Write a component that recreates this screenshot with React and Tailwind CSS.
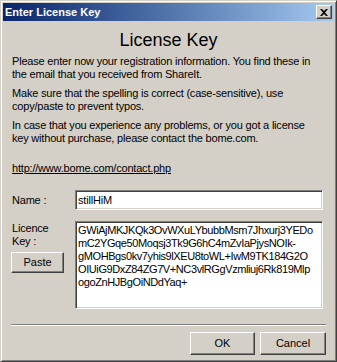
const font = { fontFamily: '"Liberation Sans", Arial, sans-serif' };

const keyLines = [
  "GWiAjMKJKQk3OvWXuLYbubbMsm7Jhxurj3YEDo",
  "mC2YGqe50Moqsj3Tk9G6hC4mZvIaPjysNOIk-",
  "gMOHBgs0kv7yhis9lXEU8toWL+IwM9TK184G2O",
  "OIUiG9DxZ84ZG7V+NC3vlRGgVzmliuj6Rk819Mlp",
  "ogoZnHJBgOiNDdYaq+",
];

function Button({ children, className = "" }) {
  return (
    <div
      className={
        "flex items-center justify-center bg-[#d4d0c8] border border-t-white border-l-white border-r-[#404040] border-b-[#404040] shadow-[inset_-1px_-1px_#808080,inset_1px_1px_#d4d0c8] text-[11px] text-black " +
        className
      }
    >
      {children}
    </div>
  );
}

function Sunken({ children, className = "" }) {
  return (
    <div
      className={
        "bg-white border border-t-[#808080] border-l-[#808080] border-r-white border-b-white shadow-[inset_1px_1px_#404040,inset_-1px_-1px_#d4d0c8] " +
        className
      }
    >
      {children}
    </div>
  );
}

export default function App() {
  return (
    <div
      style={font}
      className="w-[337px] h-[362px] bg-[#d4d0c8] border border-t-[#d4d0c8] border-l-[#d4d0c8] border-r-[#404040] border-b-[#404040] shadow-[inset_1px_1px_white,inset_-1px_-1px_#808080] p-[2px] flex flex-col text-black"
    >
      <div className="h-[18px] bg-gradient-to-r from-[#0a246a] to-[#a6caf0] flex items-center justify-between pl-[2px] pr-[2px]">
        <span className="text-white font-bold text-[11px] leading-none">Enter License Key</span>
        <Button className="w-[16px] h-[14px]">
          <svg width="8" height="7" viewBox="0 0 8 7">
            <path d="M0 0h2l2 2 2-2h2L5 3.5 8 7H6L4 5 2 7H0l3-3.5z" fill="black" />
          </svg>
        </Button>
      </div>

      <div className="flex-1 flex flex-col px-[8px] tracking-[-0.2px]">
        <div className="mt-[9px] text-center text-[18px] leading-[20px] tracking-normal">License Key</div>

        <div className="mt-[5px] text-[11px] leading-[13px] flex flex-col gap-[6px] pl-[1px]">
          <p>
            Please enter now your registration information. You find these in
            <br />
            the email that you received from ShareIt.
          </p>
          <p>
            Make sure that the spelling is correct (case-sensitive), use
            <br />
            copy/paste to prevent typos.
          </p>
          <p>
            In case that you experience any problems, or you got a license
            <br />
            key without purchase, please contact the bome.com.
          </p>
        </div>

        <div className="mt-[17px] pl-[1px] text-[11px] leading-[13px] underline">
          http://www.bome.com/contact.php
        </div>

        <div className="mt-[15px] flex items-center">
          <div className="w-[64px] pl-[1px] text-[11px]">Name :</div>
          <Sunken className="w-[248px] h-[20px] flex items-center px-[2px] text-[11px]">
            stillHiM
          </Sunken>
        </div>

        <div className="mt-[11px] flex">
          <div className="w-[64px] flex flex-col">
            <div className="pl-[1px] pt-[1px] text-[11px] leading-[13px]">
              Licence
              <br />
              Key :
            </div>
            <Button className="mt-[4px] w-[53px] h-[21px] tracking-normal">Paste</Button>
          </div>
          <Sunken className="w-[248px] h-[88px] px-[2px] pt-[2px] text-[11px] leading-[13px] tracking-[-0.4px] whitespace-pre overflow-hidden">
            {keyLines.join("\n")}
          </Sunken>
        </div>

        <div className="mt-[15px] border-t border-t-[#808080] border-b border-b-white" />

        <div className="mt-[6px] flex justify-end gap-[5px] tracking-normal">
          <Button className="w-[65px] h-[23px]">OK</Button>
          <Button className="w-[66px] h-[23px]">Cancel</Button>
        </div>
      </div>
    </div>
  );
}
